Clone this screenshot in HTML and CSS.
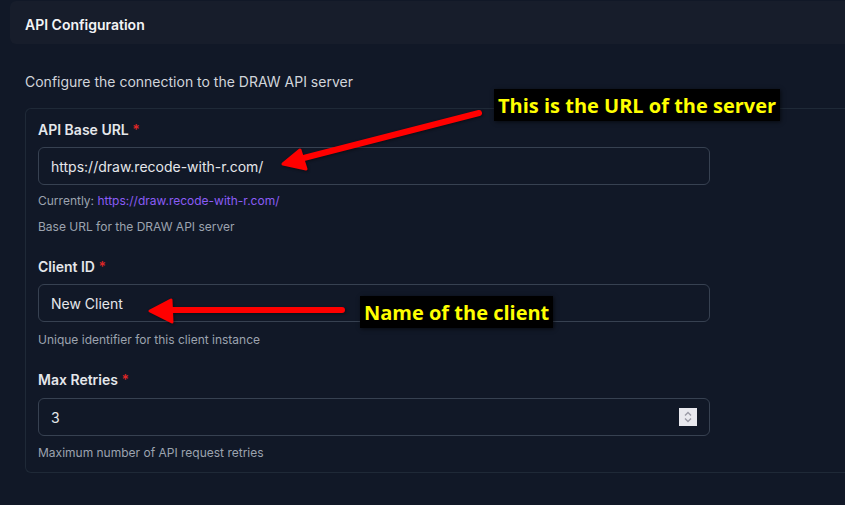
FILE: index.html
```html
<!DOCTYPE html>
<html>
<head>
<meta charset="utf-8">
<link rel="stylesheet" href="styles.css">
</head>
<body>
<div class="page">
  <div class="header"><h2 class="title">API Configuration</h2></div>
  <div class="content">
    <p class="intro">Configure the connection to the DRAW API server</p>
    <div class="card">
      <div class="field">
        <label class="label">API Base URL <span class="req">*</span></label>
        <div class="input">https://draw.recode-with-r.com/</div>
        <div class="hint hint-first">Currently: <span class="link">https://draw.recode-with-r.com/</span></div>
        <div class="hint hint-gap">Base URL for the DRAW API server</div>
      </div>
      <div class="field">
        <label class="label">Client ID <span class="req">*</span></label>
        <div class="input">New Client</div>
        <div class="hint">Unique identifier for this client instance</div>
      </div>
      <div class="field">
        <label class="label">Max Retries <span class="req">*</span></label>
        <div class="input input-num"><span>3</span>
          <span class="spin"><svg width="18" height="18" viewBox="0 0 18 18"><path d="M6 7.5 L9 4.5 L12 7.5" fill="none" stroke="#9a9aa6" stroke-width="1.4"/><path d="M6 10.5 L9 13.5 L12 10.5" fill="none" stroke="#9a9aa6" stroke-width="1.4"/></svg></span>
        </div>
        <div class="hint hint-last">Maximum number of API request retries</div>
      </div>
    </div>
  </div>
  <svg class="arrows" width="845" height="505" viewBox="0 0 845 505">
    <defs>
      <filter id="sh" x="-20%" y="-20%" width="140%" height="140%"><feGaussianBlur stdDeviation="1.5"/></filter>
    </defs>
    <g opacity="0.45" filter="url(#sh)" transform="translate(1,1)">
      <path d="M479 113 L292 161" stroke="#000" stroke-width="6" stroke-linecap="round"/>
      <path d="M283 164 L300 150 L306 169 Z" fill="#000" stroke="#000" stroke-width="3" stroke-linejoin="round"/>
      <path d="M342 310 L166 310" stroke="#000" stroke-width="6" stroke-linecap="round"/>
      <path d="M150 311 L171 300 L172 322 Z" fill="#000" stroke="#000" stroke-width="3" stroke-linejoin="round"/>
    </g>
    <path d="M479 113 L292 161" stroke="#ff0000" stroke-width="6" stroke-linecap="round"/>
    <path d="M283 164 L300 150 L306 169 Z" fill="#ff0000" stroke="#ff0000" stroke-width="3" stroke-linejoin="round"/>
    <path d="M342 310 L166 310" stroke="#ff0000" stroke-width="6" stroke-linecap="round"/>
    <path d="M150 311 L171 300 L172 322 Z" fill="#ff0000" stroke="#ff0000" stroke-width="3" stroke-linejoin="round"/>
  </svg>
  <div class="note note-url">This is the URL of the server</div>
  <div class="note note-client">Name of the client</div>
</div>
</body>
</html>
```
FILE: styles.css
```css
html, body {
  margin: 0;
  padding: 0;
  background: #111827;
  width: 845px;
  height: 505px;
  overflow: hidden;
}
.page {
  position: relative;
  width: 845px;
  height: 505px;
  font-family: Inter, "Liberation Sans", sans-serif;
  color: #e5e7eb;
  padding: 1px 0 0 10px;
  box-sizing: border-box;
}
.header {
  background: #171d2b;
  height: 43px;
  border-radius: 6px 0 0 6px;
  display: flex;
  align-items: center;
  padding: 3px 0 0 15px;
  box-sizing: border-box;
}
.title {
  margin: 0;
  font-size: 14px;
  font-weight: 600;
  color: #f3f4f6;
}
.content {
  padding-left: 15px;
}
.intro {
  margin: 28px 0 0 0;
  font-size: 14px;
  line-height: 20px;
  color: #d1d5db;
}
.card {
  margin-top: 16px;
  border: 1px solid #1f2937;
  border-right: none;
  border-radius: 6px 0 0 6px;
  padding: 12px 0 11px 12px;
  display: flex;
  flex-direction: column;
  gap: 23px;
}
.field {
  display: flex;
  flex-direction: column;
}
.label {
  font-size: 14px;
  font-weight: 600;
  line-height: 18px;
  color: #e5e7eb;
}
.req {
  color: #dc2626;
}
.input {
  margin-top: 8px;
  width: 672px;
  height: 38px;
  box-sizing: border-box;
  border: 1px solid #374151;
  border-radius: 6px;
  padding: 0 12px;
  display: flex;
  align-items: center;
  font-size: 14px;
  color: #e5e7eb;
}
.input-num {
  margin-top: 9px;
  justify-content: space-between;
  padding-right: 12px;
}
.spin {
  width: 18px;
  height: 18px;
  background: #e8e8ee;
  display: flex;
}
.hint {
  margin-top: 10px;
  font-size: 12px;
  line-height: 16px;
  color: #9ca3af;
}
.hint-first {
  margin-top: 8px;
}
.hint-gap {
  margin-top: 10px;
}
.hint-last {
  margin-top: 9px;
}
.link {
  color: #8b5cf6;
}
.arrows {
  position: absolute;
  left: 0;
  top: 0;
  pointer-events: none;
}
.note {
  position: absolute;
  background: #000;
  color: #ffff00;
  font-family: "Open Sans", "Noto Sans", sans-serif;
  font-weight: 700;
  font-size: 20px;
  line-height: 31px;
  padding: 1px 4px 0;
  box-shadow: 1px 1px 4px rgba(0,0,0,0.6);
  white-space: nowrap;
}
.note-url {
  left: 494px;
  top: 89px;
}
.note-client {
  left: 360px;
  top: 296px;
}
```
